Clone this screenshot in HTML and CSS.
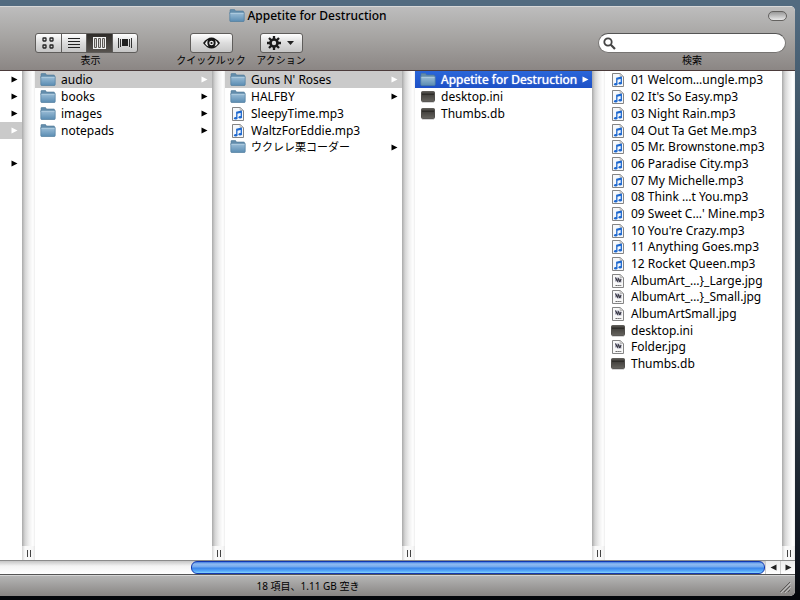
FILE: index.html
```html
<!DOCTYPE html>
<html lang="ja">
<head>
<meta charset="utf-8">
<title>Appetite for Destruction</title>
<link rel="stylesheet" href="styles.css">
</head>
<body>
<svg class="defs" aria-hidden="true">
  <defs>
    <linearGradient id="gFolder" x1="0" y1="0" x2="0" y2="1"><stop offset="0" stop-color="#9dbfd8"/><stop offset="1" stop-color="#5a8cb2"/></linearGradient>
    <linearGradient id="gExec" x1="0" y1="0" x2="0" y2="1"><stop offset="0" stop-color="#34322f"/><stop offset="1" stop-color="#66645f"/></linearGradient>
    <symbol id="folder" viewBox="0 0 16 16">
      <path d="M1 3.500V2.200Q1 1.500 1.500 1.500H5.500L6.500 3H14Q14.500 3 14.500 3.500V6H1Z" fill="#628cab" stroke="#517b99" stroke-width=".6"/>
      <path d="M.8 4.500H15.200V12.500Q15.200 13.500 14.500 13.500H1.500Q.8 13.500.8 12.500Z" fill="url(#gFolder)" stroke="#507c9d" stroke-width=".7"/>
      <path d="M1.500 5.200H14.500" stroke="#bdd5e6" stroke-width=".8"/>
    </symbol>
    <symbol id="music" viewBox="0 0 16 16">
      <path d="M2.500 1.500H10L13.500 4.500V14.500H2.500Z" fill="#f5f8fb" stroke="#858585"/>
      <path d="M10 1.500V4.500H13.500Z" fill="#d5d5d5" stroke="#a5a5a5" stroke-width=".6"/>
      <path d="M6.800 12V6.200L11.300 5.200V11" fill="none" stroke="#1d68cf" stroke-width="1.300"/>
      <path d="M6.800 7L11.300 6" stroke="#1d68cf" stroke-width="1.600"/>
      <ellipse cx="5.700" cy="12.200" rx="1.700" ry="1.300" fill="#1d68cf"/><ellipse cx="10.200" cy="11.200" rx="1.700" ry="1.300" fill="#1d68cf"/>
    </symbol>
    <symbol id="image" viewBox="0 0 16 16">
      <path d="M2.500 1.500H10L13.500 4.500V14.500H2.500Z" fill="#f8f8f8" stroke="#858585"/>
      <path d="M10 1.500V4.500H13.500Z" fill="#d5d5d5" stroke="#a5a5a5" stroke-width=".6"/>
      <path d="M5 4.500H9V5.500H11.500V9.500H7V8.500H5Z" fill="#a5a5b5"/>
      <path d="M5.500 4.500L7.500 8.500L8.500 5.500L9.800 9L11 6" fill="none" stroke="#30303a" stroke-width="1"/>
      <path d="M5.500 12.500H11.500" stroke="#6d6d6d" stroke-width="1.200" stroke-dasharray="1.500 .4"/>
    </symbol>
    <symbol id="exec" viewBox="0 0 16 16">
      <rect x="1.500" y="2.500" width="13" height="10" rx="1" fill="url(#gExec)" stroke="#504e4b"/>
      <path d="M2 5.500H14" stroke="#2b2926" stroke-width=".8"/><path d="M2 3H14" stroke="#77746f" stroke-width=".8"/>
      <path d="M2 13.300H14" stroke="#aaa" stroke-width=".6"/>
    </symbol>
    <symbol id="arrow" viewBox="0 0 7 7"><path d="M.5 .5L6.500 3.500L.5 6.500Z" fill="currentColor"/></symbol>
  </defs>
</svg>
<main class="window">
  <header class="head">
    <div class="titlebar">
      <h1 class="title"><svg class="icon"><use href="#folder"/></svg>Appetite for Destruction</h1>
      <button class="pill" type="button" aria-label="ツールバー"></button>
    </div>
    <div class="toolbar">
      <div class="tool view">
        <div class="segments">
          <button type="button" aria-label="アイコン"><svg width="12" height="12" viewBox="0 0 12 12" fill="none" stroke="#222" stroke-width="1.300"><rect x="1" y="1" width="3" height="3" rx=".5"/><rect x="8" y="1" width="3" height="3" rx=".5"/><rect x="1" y="8" width="3" height="3" rx=".5"/><rect x="8" y="8" width="3" height="3" rx=".5"/></svg></button>
          <button type="button" aria-label="リスト"><svg width="12" height="12" viewBox="0 0 12 12" stroke="#222"><path d="M0 1.500H12M0 4.500H12M0 7.500H12M0 10.500H12"/></svg></button>
          <button type="button" class="on" aria-label="カラム" aria-pressed="true"><svg width="13" height="12" viewBox="0 0 13 12"><path d="M0 0H13V12H0Z" fill="#f4f4f4"/><path d="M1.500 1.500H3.500V10.500H1.500ZM5.500 1.500H7.500V10.500H5.500ZM9.500 1.500H11.500V10.500H9.500Z" fill="#d8d6d3" stroke="#5b5855"/></svg></button>
          <button type="button" aria-label="カバーフロー"><svg width="14" height="10" viewBox="0 0 14 10"><path d="M4 1H10V8H4Z" fill="#222"/><path d="M.5 0V10M2.500 1V9M11.500 1V9M13.500 0V10" stroke="#333"/></svg></button>
        </div>
        <span class="caption">表示</span>
      </div>
      <div class="tool look">
        <button class="push" type="button" aria-labelledby="lookLabel"><svg width="17" height="12" viewBox="0 0 17 12"><path d="M0 6Q8.500-5 17 6Q8.500 17 0 6Z" fill="#151515"/><path d="M2 6.500Q3 4 5 3Q3.500 6 5.500 9.500Q3 8.500 2 6.500ZM15 6.500Q14 4 12 3Q13.500 6 11.500 9.500Q14 8.500 15 6.500Z" fill="#eee"/><circle cx="8.500" cy="6" r="2.300" fill="#eee"/><circle cx="8.500" cy="6" r="1.100" fill="#151515"/></svg></button>
        <span class="caption" id="lookLabel">クイックルック</span>
      </div>
      <div class="tool action">
        <button class="push" type="button" aria-labelledby="actionLabel"><svg width="28" height="14" viewBox="0 0 28 14"><g fill="none" stroke="#1b1b1b"><circle cx="7" cy="7" r="3.500" stroke-width="2.600"/><path d="M7 0V3M7 11V14M0 7H3M11 7H14M2 2L4.200 4.200M9.800 9.800L12 12M2 12L4.200 9.800M9.800 4.200L12 2" stroke-width="2.300"/></g><path d="M20 5H27L23.500 9Z" fill="#222"/></svg></button>
        <span class="caption" id="actionLabel">アクション</span>
      </div>
      <div class="tool search">
        <div class="field"><svg width="13" height="13" viewBox="0 0 13 13" fill="none" stroke="#444"><circle cx="5" cy="5" r="3.700" stroke-width="1.800"/><path d="M7.800 7.800L12 12" stroke-width="2.200"/></svg><input id="search" type="search"></div>
        <label class="caption" for="search">検索</label>
      </div>
    </div>
  </header>
  <section class="browser">
    <ul class="column parent">
      <li><svg class="arrow"><use href="#arrow"/></svg></li>
      <li><svg class="arrow"><use href="#arrow"/></svg></li>
      <li><svg class="arrow"><use href="#arrow"/></svg></li>
      <li class="open"><svg class="arrow"><use href="#arrow"/></svg></li>
      <li></li>
      <li><svg class="arrow"><use href="#arrow"/></svg></li>
    </ul>
    <div class="divider"></div>
    <ul class="column">
      <li class="open"><svg class="icon"><use href="#folder"/></svg><span>audio</span><svg class="arrow"><use href="#arrow"/></svg></li>
      <li><svg class="icon"><use href="#folder"/></svg><span>books</span><svg class="arrow"><use href="#arrow"/></svg></li>
      <li><svg class="icon"><use href="#folder"/></svg><span>images</span><svg class="arrow"><use href="#arrow"/></svg></li>
      <li><svg class="icon"><use href="#folder"/></svg><span>notepads</span><svg class="arrow"><use href="#arrow"/></svg></li>
    </ul>
    <div class="divider"></div>
    <ul class="column">
      <li class="open"><svg class="icon"><use href="#folder"/></svg><span>Guns N' Roses</span><svg class="arrow"><use href="#arrow"/></svg></li>
      <li><svg class="icon"><use href="#folder"/></svg><span>HALFBY</span><svg class="arrow"><use href="#arrow"/></svg></li>
      <li><svg class="icon"><use href="#music"/></svg><span>SleepyTime.mp3</span></li>
      <li><svg class="icon"><use href="#music"/></svg><span>WaltzForEddie.mp3</span></li>
      <li><svg class="icon"><use href="#folder"/></svg><span class="kana">ウクレレ栗コーダー</span><svg class="arrow"><use href="#arrow"/></svg></li>
    </ul>
    <div class="divider"></div>
    <ul class="column">
      <li class="selected"><svg class="icon"><use href="#folder"/></svg><span>Appetite for Destruction</span><svg class="arrow"><use href="#arrow"/></svg></li>
      <li><svg class="icon"><use href="#exec"/></svg><span>desktop.ini</span></li>
      <li><svg class="icon"><use href="#exec"/></svg><span>Thumbs.db</span></li>
    </ul>
    <div class="divider"></div>
    <ul class="column">
      <li><svg class="icon"><use href="#music"/></svg><span>01 Welcom…ungle.mp3</span></li>
      <li><svg class="icon"><use href="#music"/></svg><span>02 It's So Easy.mp3</span></li>
      <li><svg class="icon"><use href="#music"/></svg><span>03 Night Rain.mp3</span></li>
      <li><svg class="icon"><use href="#music"/></svg><span>04 Out Ta Get Me.mp3</span></li>
      <li><svg class="icon"><use href="#music"/></svg><span>05 Mr. Brownstone.mp3</span></li>
      <li><svg class="icon"><use href="#music"/></svg><span>06 Paradise City.mp3</span></li>
      <li><svg class="icon"><use href="#music"/></svg><span>07 My Michelle.mp3</span></li>
      <li><svg class="icon"><use href="#music"/></svg><span>08 Think …t You.mp3</span></li>
      <li><svg class="icon"><use href="#music"/></svg><span>09 Sweet C…' Mine.mp3</span></li>
      <li><svg class="icon"><use href="#music"/></svg><span>10 You're Crazy.mp3</span></li>
      <li><svg class="icon"><use href="#music"/></svg><span>11 Anything Goes.mp3</span></li>
      <li><svg class="icon"><use href="#music"/></svg><span>12 Rocket Queen.mp3</span></li>
      <li><svg class="icon"><use href="#image"/></svg><span>AlbumArt_…}_Large.jpg</span></li>
      <li><svg class="icon"><use href="#image"/></svg><span>AlbumArt_…}_Small.jpg</span></li>
      <li><svg class="icon"><use href="#image"/></svg><span>AlbumArtSmall.jpg</span></li>
      <li><svg class="icon"><use href="#exec"/></svg><span>desktop.ini</span></li>
      <li><svg class="icon"><use href="#image"/></svg><span>Folder.jpg</span></li>
      <li><svg class="icon"><use href="#exec"/></svg><span>Thumbs.db</span></li>
    </ul>
    <div class="divider"></div>
  </section>
  <div class="scrollbar">
    <div class="track"><div class="thumb"></div></div>
    <button class="step" type="button" aria-label="左へ"><svg class="arrow back"><use href="#arrow"/></svg></button>
    <button class="step" type="button" aria-label="右へ"><svg class="arrow"><use href="#arrow"/></svg></button>
  </div>
  <footer class="status">
    <span class="count">18 項目、1.11 GB 空き</span>
    <svg class="grip" width="12" height="12" viewBox="0 0 12 12" stroke="#5c5a58"><path d="M1 11L11 1M5 11L11 5M9 11L11 9"/><path d="M2 12L12 2M6 12L12 6" stroke="#d0d0d0" stroke-width=".7"/></svg>
  </footer>
</main>
</body>
</html>
```

FILE: styles.css
```css
* { box-sizing: border-box; }

body {
  margin: 0;
  min-height: 100vh;
  display: flex;
  flex-direction: column;
  padding: 6px 5px 4px 0;
  background: linear-gradient(#526b80 0, #526b80 10px, #344858 180px, #2c3944 400px, #10151f 560px, #05070b 594px);
  font-family: "Noto Sans", "Noto Sans CJK JP", sans-serif;
  font-size: 12px;
  line-height: 16px;
  color: #000;
}

.defs { position: absolute; width: 0; height: 0; }
button { margin: 0; padding: 0; border: 0; font: inherit; }

.window {
  flex: 1;
  display: flex;
  flex-direction: column;
  border-radius: 0 5px 5px 0;
  overflow: hidden;
  background: #fff;
}

.head {
  border-top: 1px solid #d8d8d8;
  border-bottom: 1px solid #4b3b3b;
  background: linear-gradient(#bdbdbd, #a5a3a1 50%, #8b8684);
}

.titlebar {
  display: flex;
  align-items: center;
  height: 18px;
  padding-right: 8px;
}

.title {
  flex: 1;
  display: flex;
  justify-content: center;
  align-items: center;
  gap: 2px;
  margin: 0;
  padding-right: 152px;
  font-size: 12px;
  font-weight: 500;
}

.icon { flex: none; width: 16px; height: 16px; }
.arrow { flex: none; width: 7px; height: 7px; }

.pill {
  width: 19px;
  height: 10px;
  border: 1px solid #646260;
  border-radius: 5px;
  background: linear-gradient(#999, #e8e8e8);
}

.toolbar {
  display: flex;
  padding: 8px 9px 2px 35px;
}

.tool { display: flex; flex-direction: column; align-items: center; }

.caption {
  font-size: 10px;
  line-height: 15px;
  white-space: nowrap;
}

.view .caption { padding-left: 8px; }
.look { width: 70px; margin-left: 38px; }
.action { width: 50px; margin-left: 10px; }
.search { width: 188px; margin-left: auto; }

.segments,
.push {
  display: flex;
  height: 20px;
  border: 1px solid #5f5d5b;
  border-radius: 3px;
  background: linear-gradient(#fff, #dcdcdc 50%, #c6c6c6);
  overflow: hidden;
}

.segments { width: 103px; }

.segments button {
  flex: 1;
  display: flex;
  align-items: center;
  justify-content: center;
  background: transparent;
}

.segments button + button { border-left: 1px solid #5f5d5b; }
.segments .on { background: linear-gradient(#2f2c29, #56524e); }

.push { width: 43px; align-items: center; justify-content: center; }

.field {
  display: flex;
  align-items: center;
  gap: 4px;
  width: 100%;
  height: 20px;
  padding: 0 8px 0 4px;
  border: 1px solid #777573;
  border-top-color: #555;
  border-radius: 10px;
  background: #fff;
}

.field input {
  flex: 1;
  min-width: 0;
  border: 0;
  outline: 0;
  background: transparent;
  font: inherit;
}

.browser { flex: 1; display: flex; }

.column {
  flex: 1;
  min-width: 0;
  margin: 0;
  padding: 0;
  list-style: none;
}

.column.parent { flex: 0 0 22px; }

.column li {
  display: flex;
  align-items: center;
  gap: 5px;
  height: 17px;
  padding: 0 4px 0 5px;
  white-space: nowrap;
}

.column li:nth-child(3n + 2) { height: 16px; }
.column li:nth-child(2) { height: 17px; }
.column li span { flex: 1; }
.column li .kana { font-size: 11px; }
.parent li { justify-content: flex-end; }
.column .open { background: #cacaca; }
.open .arrow { color: #fff; }
.column .selected { background: linear-gradient(#2a66d9, #1d50c6); color: #fff; }
.selected span { text-shadow: 0 0 1px #fff; }

.divider {
  flex: 0 0 13px;
  display: flex;
  align-items: flex-end;
  background: linear-gradient(90deg, #a9a9a9, #d5d5d5 3px, #efefef 7px, #fff 11px, #eee 13px);
}

.divider::after {
  content: "";
  width: 100%;
  height: 14px;
  background:
    linear-gradient(#444, #444) 5px 4px / 1px 7px no-repeat,
    linear-gradient(#444, #444) 8px 4px / 1px 7px no-repeat,
    linear-gradient(90deg, #d5d5d5, #fafafa 3px, #f7f7f7 11px, #e5e5e5);
}

.scrollbar {
  display: flex;
  height: 15px;
  border-top: 1px solid #8b8b8b;
  border-bottom: 1px solid #555;
}

.track {
  flex: 1;
  padding-left: 24%;
  background: linear-gradient(#c5c5c5, #f4f4f4 5px, #fff);
}

.thumb {
  height: 13px;
  border: 1px solid #1238b0;
  border-radius: 6px;
  background: linear-gradient(#3e7be0, #91bcf1 2px, #70a8ef 5px, #3a84ea 6px, #55a8fa 9px, #84d4fc);
}

.step {
  width: 15px;
  display: flex;
  align-items: center;
  justify-content: center;
  border-left: 1px solid #ccc;
  background: linear-gradient(#ececec, #fff);
  color: #222;
}

.back { transform: rotate(180deg); }

.status {
  display: flex;
  align-items: center;
  height: 21px;
  padding-right: 4px;
  border-top: 1px solid #d5d5d5;
  background: linear-gradient(#b5b5b5, #888583);
  font-size: 10px;
}

.count { flex: 1; padding-right: 163px; text-align: center; }
.grip { flex: none; align-self: flex-end; margin-bottom: 3px; }
```
